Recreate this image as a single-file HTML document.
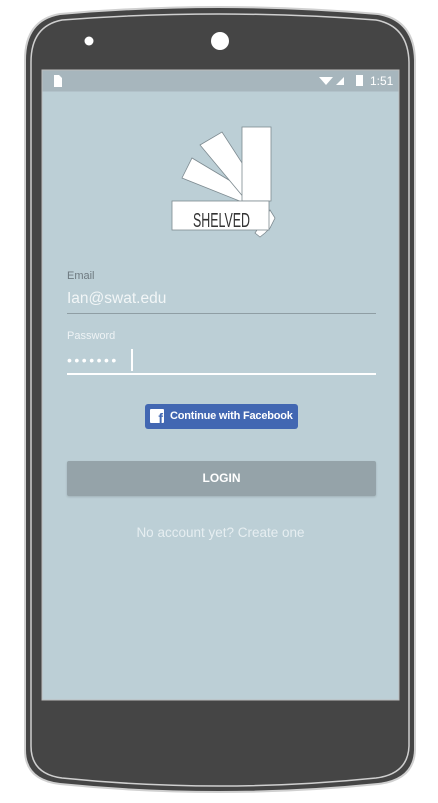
<!DOCTYPE html>
<html><head><style>
*{margin:0;padding:0;box-sizing:border-box}
body{width:438px;height:803px;background:#fff;position:relative;overflow:hidden;font-family:"Liberation Sans",sans-serif}
.abs{position:absolute}
</style></head><body>
<svg class="abs" style="left:0;top:0" width="438" height="803">
<path d="M60 14 Q219 0 378 14 Q414 20 415 60 L415 750 Q414 780 378 784 Q219 800 60 784 Q25 780 25 750 L25 60 Q25 20 60 14Z" fill="#454545" stroke="#d0d0d0" stroke-width="2"/>
<path d="M62 20 Q219 8 376 20 Q408 26 409 62 L409 746 Q408 774 376 778 Q219 794 62 778 Q31 774 31 746 L31 62 Q31 26 62 20Z" fill="none" stroke="#cfcfcf" stroke-width="1.5"/>
<circle cx="89" cy="41" r="4.5" fill="#fff"/>
<circle cx="220" cy="41" r="9" fill="#fff"/>
<rect x="42" y="70" width="357" height="630" fill="#bccfd6" stroke="#bdbdbd" stroke-width="1"/>
<rect x="42.5" y="70.5" width="356" height="21" fill="#a7b6bd"/>
<path d="M54 75 h5 l3 3 v9 h-8z" fill="#fff"/>
<path d="M319 77 L333 77 L326 85Z" fill="#fff"/>
<path d="M336 85 L344 77 L344 85Z" fill="#fff"/>
<rect x="356" y="75" width="7" height="11" fill="#fff"/>
<text x="370" y="85" font-size="12" fill="#fff" font-family="Liberation Sans">1:51</text>
<g stroke="#7d8a90" stroke-width="0.8" fill="#fff">
<polygon points="182,178 192,158 264,201 252,206"/>
<polygon points="200,145 222,132 266,200 250,205"/>
<rect x="242" y="127" width="29" height="74"/>
<polygon points="255,233 260,237 265,233 270,228 275,218 270,210"/>
<rect x="172" y="201" width="97" height="29"/>
</g>
<text x="193" y="227" font-size="20" fill="#333" font-family="Liberation Sans Narrow, Liberation Sans" textLength="57" lengthAdjust="spacingAndGlyphs">SHELVED</text>
</svg>
<div class="abs" style="left:67px;top:270px;font-size:11px;color:#6e7a80">Email</div>
<div class="abs" style="left:67px;top:290px;font-size:15.5px;color:#f2f6f7">Ian@swat.edu</div>
<div class="abs" style="left:67px;top:313px;width:309px;height:1px;background:#8f9ea4"></div>
<div class="abs" style="left:67px;top:330px;font-size:11px;color:#eef3f5">Password</div>
<div class="abs" style="left:67px;top:352px;font-size:14px;color:#fff;letter-spacing:2.5px">•••••••</div>
<div class="abs" style="left:131px;top:349px;width:1.5px;height:22px;background:#fff"></div>
<div class="abs" style="left:67px;top:373px;width:309px;height:2px;background:#fff"></div>
<div class="abs" style="left:145px;top:404px;width:153px;height:25px;background:#4267b2;border-radius:3px;color:#fff;font-size:11px;font-weight:bold;line-height:25px;padding-left:25px;white-space:nowrap;letter-spacing:-0.2px">Continue with Facebook</div>
<div class="abs" style="left:150px;top:409px;width:14px;height:14px;background:#fff;border-radius:1px;color:#4267b2;font-weight:bold;font-size:14px;line-height:18px;text-align:right;padding-right:1px;overflow:hidden">f</div>
<div class="abs" style="left:67px;top:461px;width:309px;height:35px;background:#95a3a9;border-radius:2px;box-shadow:0 1px 2px rgba(0,0,0,.15);color:#fff;font-size:12px;font-weight:bold;text-align:center;line-height:35px">LOGIN</div>
<div class="abs" style="left:42px;top:525px;width:357px;text-align:center;font-size:13.5px;color:#e6eef1">No account yet? Create one</div>
</body></html>
